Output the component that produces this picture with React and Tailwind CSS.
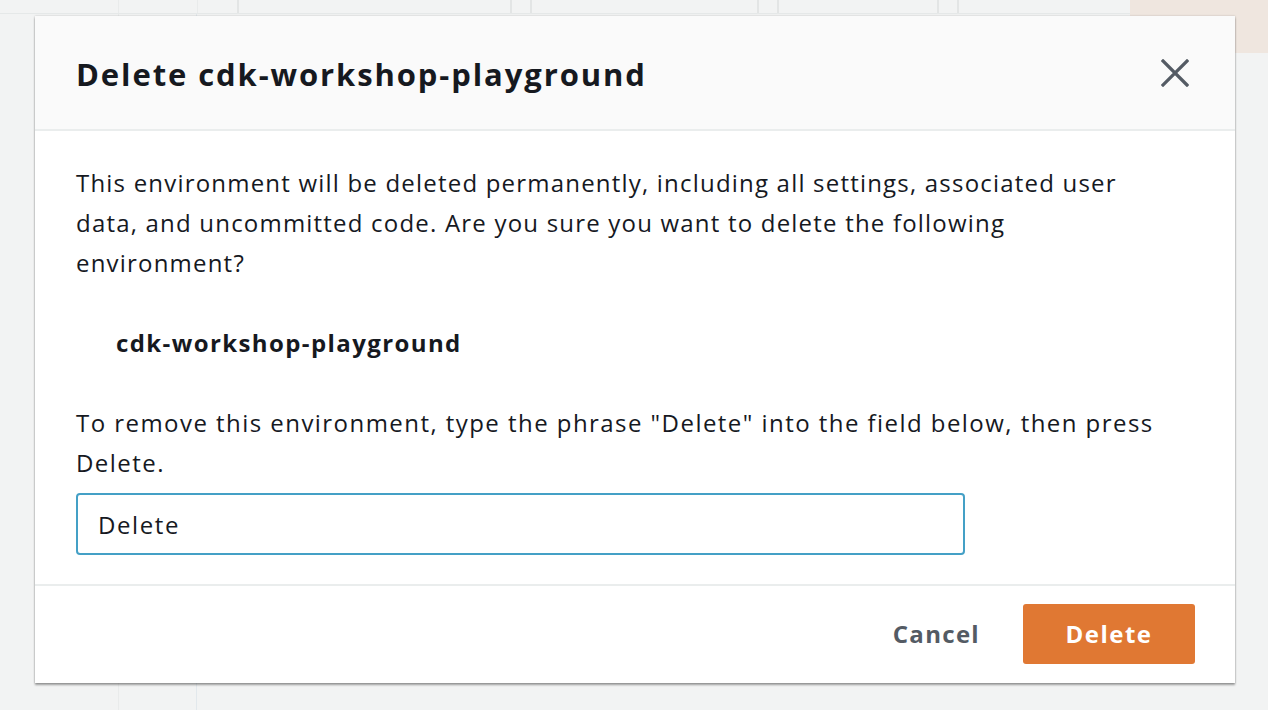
import React, { useState } from "react";

const font = { fontFamily: '"Open Sans", "Noto Sans", Arial, sans-serif' };

export default function App() {
  const [value, setValue] = useState("Delete");

  return (
    <div className="relative w-[1268px] h-[710px] overflow-hidden bg-[#f2f3f3]" style={font}>
      {/* page behind the modal */}
      <div className="flex h-[14px] border-b border-[#e5e8e8]">
        <div className="w-[118px]" />
        <div className="w-[79px] border-l border-[#e9ebeb]" />
        <div className="w-[40px] border-l border-[#e9ebeb]" />
        <div className="w-[273px] border-l-2 border-[#e3e5e5]" />
        <div className="w-[20px] border-l-2 border-[#e3e5e5]" />
        <div className="w-[227px] border-l-2 border-[#e3e5e5]" />
        <div className="w-[20px] border-l-2 border-[#e3e5e5]" />
        <div className="w-[160px] border-l-2 border-[#e3e5e5]" />
        <div className="w-[20px] border-l-2 border-[#e3e5e5]" />
        <div className="w-[173px] border-l-2 border-[#e3e5e5]" />
        <div className="flex-1 bg-[#efe6df] h-[53px]" />
      </div>
      <div className="flex h-full">
        <div className="w-[118px]" />
        <div className="w-[79px] border-l border-[#e9ebeb] border-r border-r-[#e2e8ec]" />
      </div>

      {/* modal */}
      <div className="absolute left-[35px] top-[16px] w-[1200px] bg-white shadow-[0_2px_2px_rgba(0,0,0,0.35),0_0_2px_rgba(0,0,0,0.2)]">
        <div className="flex items-center justify-between h-[115px] bg-[#fafafa] border-b-2 border-[#eaeded] pl-[41px] pr-[46px]">
          <h1 className="text-[31px] font-bold text-[#16191f] tracking-[1.9px] pt-[3px]">Delete cdk-workshop-playground</h1>
          <svg width="28" height="28" viewBox="0 0 28 28">
            <path d="M2 2 L26 26 M26 2 L2 26" stroke="#545b64" strokeWidth="3.2" strokeLinecap="square" />
          </svg>
        </div>

        <div className="pl-[41px] pr-[40px] pt-[32px] pb-[29px] text-[#16191f] text-[24px] leading-[40px] tracking-[1.2px]">
          <p>
            This environment will be deleted permanently, including all settings, associated user
            <br />
            data, and uncommitted code. Are you sure you want to delete the following
            <br />
            environment?
          </p>
          <p className="font-bold pl-[40px] mt-[40px] tracking-[1.4px]">cdk-workshop-playground</p>
          <p className="mt-[40px] tracking-[1.45px]">
            To remove this environment, type the phrase "Delete" into the field below, then press
            <br />
            Delete.
          </p>
          <input
            value={value}
            onChange={e => setValue(e.target.value)}
            className="mt-[10px] w-[889px] h-[62px] border-2 border-[#44a0c6] rounded-[4px] px-[20px] text-[24px] tracking-[1.6px] text-[#16191f] outline-none"
            style={font}
          />
        </div>

        <div className="flex items-center justify-end gap-[43px] h-[99px] border-t-2 border-[#eaeded] pr-[40px] pb-[2px]">
          <button className="text-[24px] font-bold text-[#545b64] tracking-[1.3px]">Cancel</button>
          <button className="w-[172px] h-[60px] rounded-[3px] bg-[#e07833] text-white text-[24px] font-bold tracking-[1.5px]">Delete</button>
        </div>
      </div>
    </div>
  );
}
